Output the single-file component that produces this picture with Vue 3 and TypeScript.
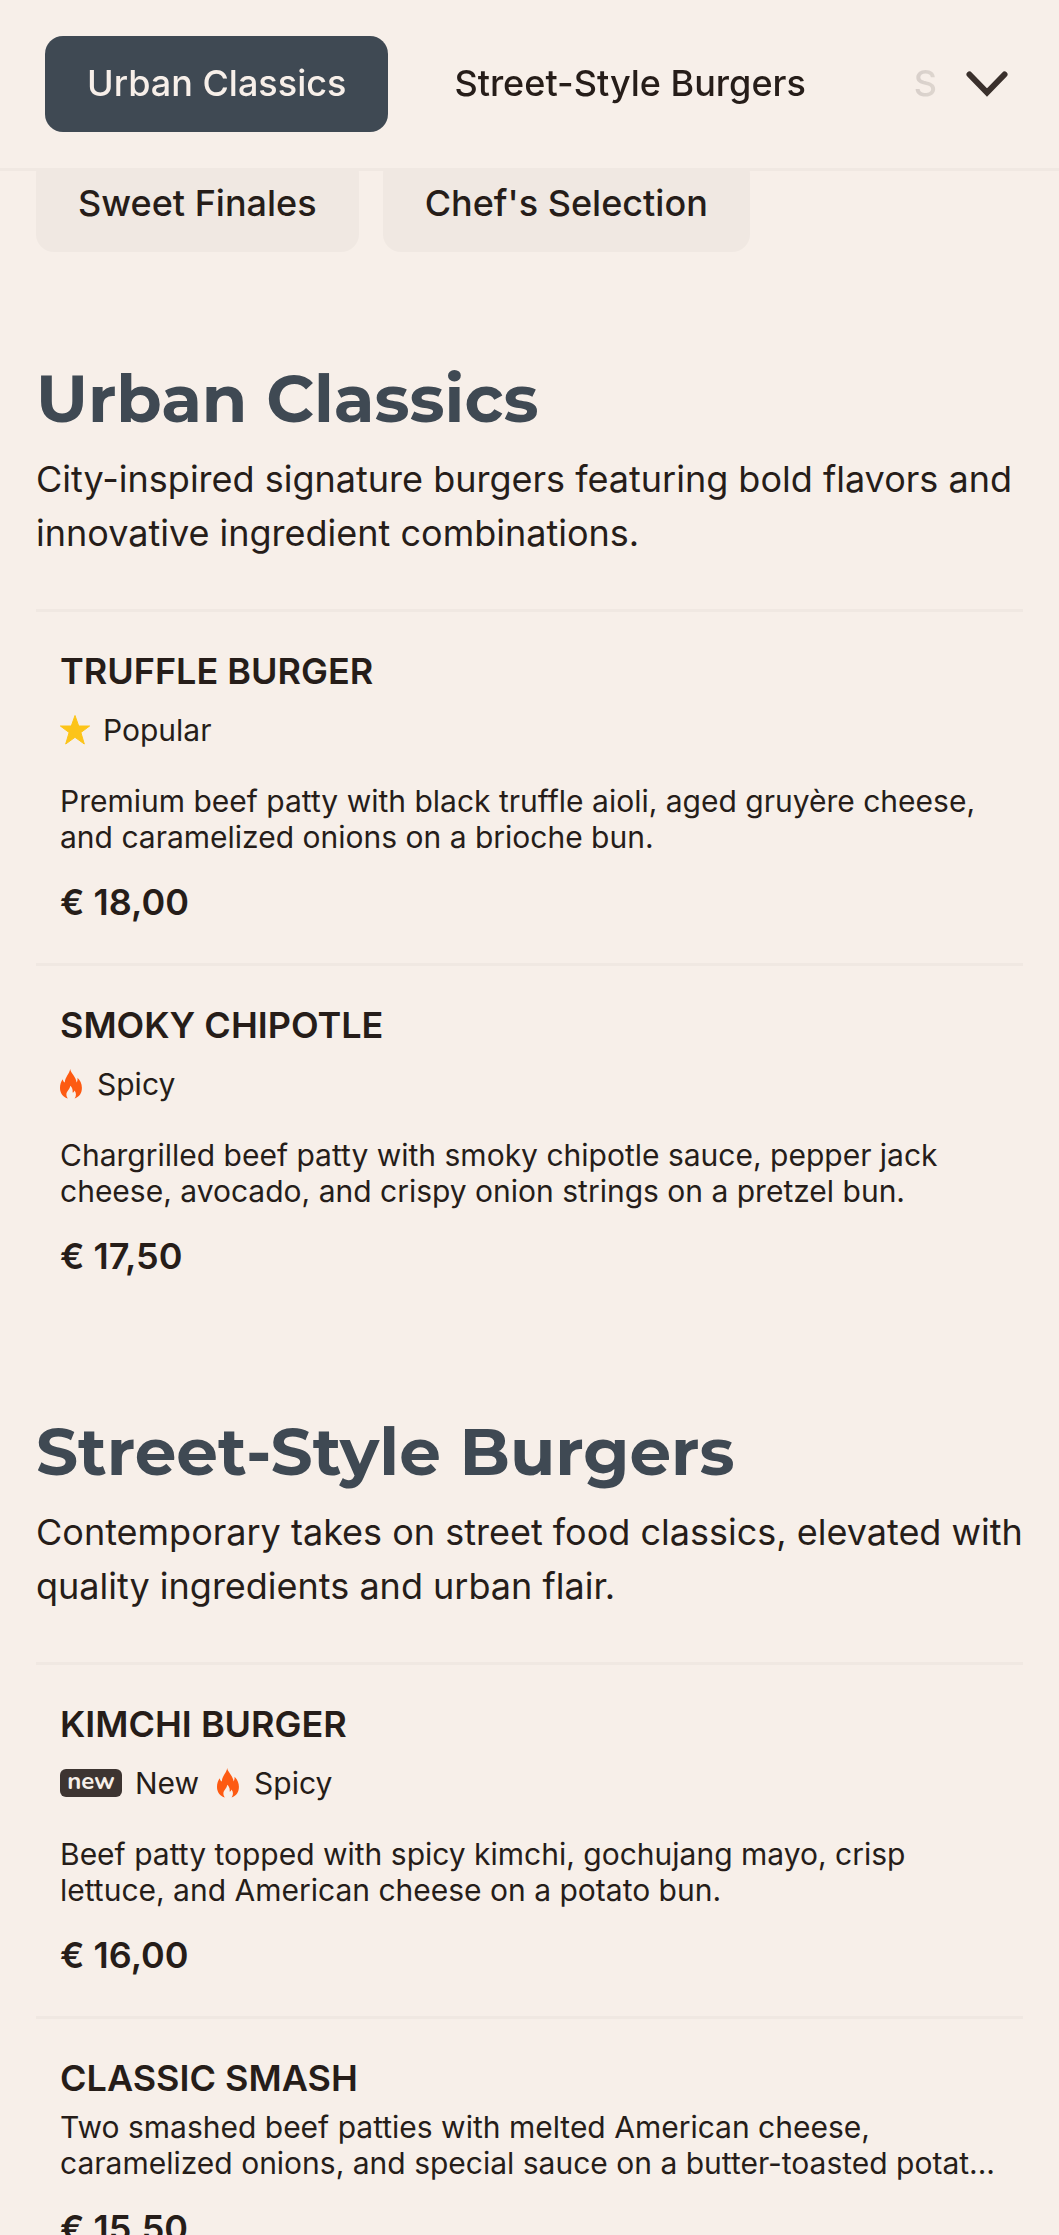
<script setup lang="ts">
import { ref } from 'vue'

type Tag = 'popular' | 'spicy' | 'new'

interface Dish {
  name: string
  tags: Tag[]
  description: string
  price: string
}

interface MenuSection {
  title: string
  intro: string
  dishes: Dish[]
}

const tagLabels: Record<Tag, string> = { popular: 'Popular', spicy: 'Spicy', new: 'New' }

const tabs = ['Urban Classics', 'Street-Style Burgers', 'Sweet Finales']
const chips = ['Sweet Finales', "Chef's Selection"]
const activeTab = ref(tabs[0])

const sections: MenuSection[] = [
  {
    title: 'Urban Classics',
    intro: 'City-inspired signature burgers featuring bold flavors and innovative ingredient combinations.',
    dishes: [
      {
        name: 'TRUFFLE BURGER',
        tags: ['popular'],
        description: 'Premium beef patty with black truffle aioli, aged gruyère cheese, and caramelized onions on a brioche bun.',
        price: '€ 18,00',
      },
      {
        name: 'SMOKY CHIPOTLE',
        tags: ['spicy'],
        description: 'Chargrilled beef patty with smoky chipotle sauce, pepper jack cheese, avocado, and crispy onion strings on a pretzel bun.',
        price: '€ 17,50',
      },
    ],
  },
  {
    title: 'Street-Style Burgers',
    intro: 'Contemporary takes on street food classics, elevated with quality ingredients and urban flair.',
    dishes: [
      {
        name: 'KIMCHI BURGER',
        tags: ['new', 'spicy'],
        description: 'Beef patty topped with spicy kimchi, gochujang mayo, crisp lettuce, and American cheese on a potato bun.',
        price: '€ 16,00',
      },
      {
        name: 'CLASSIC SMASH',
        tags: [],
        description: 'Two smashed beef patties with melted American cheese, caramelized onions, and special sauce on a butter-toasted potat...',
        price: '€ 15,50',
      },
    ],
  },
]
</script>

<template>
  <div class="page">
    <header class="topbar">
      <nav class="tabs" aria-label="Menu sections">
        <button
          v-for="tab in tabs"
          :key="tab"
          type="button"
          class="pill"
          :class="{ active: tab === activeTab }"
          @click="activeTab = tab"
        >{{ tab }}</button>
      </nav>
      <button type="button" class="expand" aria-label="Show all sections">
        <svg width="42" height="26" viewBox="0 0 42 26" aria-hidden="true">
          <path d="M3.5 3.5 21 21.5 38.5 3.5" fill="none" stroke="#3a302c" stroke-width="6" stroke-linecap="round" />
        </svg>
      </button>
    </header>

    <main class="content">
      <div class="chips">
        <button v-for="chip in chips" :key="chip" type="button" class="pill chip">{{ chip }}</button>
      </div>

      <section v-for="section in sections" :key="section.title" class="section">
        <h2>{{ section.title }}</h2>
        <p class="intro">{{ section.intro }}</p>
        <article v-for="dish in section.dishes" :key="dish.name" class="dish">
          <h3>{{ dish.name }}</h3>
          <ul v-if="dish.tags.length" class="tags">
            <li v-for="tag in dish.tags" :key="tag">
              <svg v-if="tag === 'popular'" width="30" height="30" viewBox="0 0 30 30" aria-hidden="true">
                <path
                  d="M15 .5 18.7 11H29.6L20.9 17.5 24.3 29 15 22.3 5.7 29 9.1 17.5.4 11H11.3Z"
                  fill="#fcc419" stroke="#fcc419" stroke-width="1" stroke-linejoin="round"
                />
              </svg>
              <svg v-else-if="tag === 'spicy'" width="24" height="30" viewBox="0 0 24 30" aria-hidden="true">
                <path
                  d="M10.2 0C10.6 4.2 16 7.4 16.6 13.6 17.5 12.2 17.7 10.4 17.5 8.8 20 11 21.9 14.6 21.9 18.8 21.9 24 19.6 27.8 14.6 29.6 16.4 27 16.4 24 14.6 21.4 14.2 22.6 13.4 23.4 12.6 23.6 13 20.8 12.2 18.4 10.2 16.8 10 20.4 6.4 22 6.4 25.6 6.4 27.2 7 28.6 8 29.6 3 28 0 24.2 0 19 0 15.6 1 12.6 2.6 10.2 3 11.6 3.6 12.8 4.8 13.4 5 8.2 9.4 5 10.2 0Z"
                  fill="#fd5a12"
                />
              </svg>
              <span v-else class="new-mark" aria-hidden="true">new</span>
              {{ tagLabels[tag] }}
            </li>
          </ul>
          <p class="description">{{ dish.description }}</p>
          <p class="price">{{ dish.price }}</p>
        </article>
      </section>
    </main>
  </div>
</template>

<style>
body {
  margin: 0;
  background: #f7efe9;
}
</style>

<style scoped>
.page {
  display: flex;
  flex-direction: column;
  height: 100vh;
  background: #f7efe9;
  color: #261d19;
  font-family: Inter, "Liberation Sans", sans-serif;
}

h2,
h3,
p,
ul {
  margin: 0;
  padding: 0;
}

.topbar {
  display: flex;
  flex: none;
  align-items: center;
  padding: 36px 43px 36px 45px;
  border-bottom: 3px solid #f0e8e2;
}

.tabs {
  display: flex;
  flex: 1;
  min-width: 0;
  gap: 24px;
  overflow: hidden;
  -webkit-mask-image: linear-gradient(to right, #000 calc(100% - 130px), rgba(0, 0, 0, 0.15) calc(100% - 20px), rgba(0, 0, 0, 0.12));
  mask-image: linear-gradient(to right, #000 calc(100% - 130px), rgba(0, 0, 0, 0.15) calc(100% - 20px), rgba(0, 0, 0, 0.12));
}

.pill {
  flex: none;
  height: 96px;
  padding: 0 42px 2px;
  border: 0;
  border-radius: 18px;
  background: transparent;
  color: inherit;
  font: 500 36px/44px Inter, "Liberation Sans", sans-serif;
  white-space: nowrap;
  cursor: pointer;
}

.pill.active {
  background: #3f4953;
  color: #f7efe9;
}

.pill.chip {
  background: #f0e8e2;
}

.expand {
  display: flex;
  flex: none;
  align-items: center;
  justify-content: flex-end;
  width: 80px;
  height: 96px;
  padding: 0 8px 0 0;
  border: 0;
  background: transparent;
  cursor: pointer;
}

.content {
  flex: 1;
  min-height: 0;
  padding: 0 36px;
  overflow-y: auto;
  scrollbar-width: none;
}

/* The chip row slides partly beneath the fixed bar. */
.chips {
  display: flex;
  gap: 24px;
  margin-top: -15px;
  margin-bottom: 107px;
}

.section {
  margin-bottom: 94px;
}

h2 {
  color: #3f4953;
  font-family: Montserrat, Inter, "Liberation Sans", sans-serif;
  font-size: 66px;
  font-weight: 700;
  line-height: 80px;
}

.intro {
  margin: 13px 0 49px;
  font-size: 36px;
  line-height: 54px;
}

.dish {
  padding: 37px 24px 38px;
  border-top: 3px solid #f0e8e2;
}

.dish:last-child {
  padding-bottom: 39px;
}

h3 {
  font-size: 36px;
  font-weight: 600;
  line-height: 45px;
}

.tags {
  display: flex;
  gap: 18px;
  margin: 18px 0 35px;
  list-style: none;
}

.tags li {
  display: flex;
  align-items: center;
  gap: 13px;
  font-size: 30px;
  line-height: 36px;
}

.new-mark {
  box-sizing: border-box;
  width: 62px;
  height: 28px;
  border-radius: 6px;
  background: #3d3431;
  color: #f7efe9;
  font: 700 24px/24px Nunito, "Noto Sans", "Open Sans", sans-serif;
  text-align: center;
}

.description {
  font-size: 30px;
  line-height: 36px;
}

h3 + .description {
  margin-top: 8px;
}

.price {
  margin-top: 25px;
  font-size: 36px;
  font-weight: 600;
  line-height: 45px;
}
</style>
